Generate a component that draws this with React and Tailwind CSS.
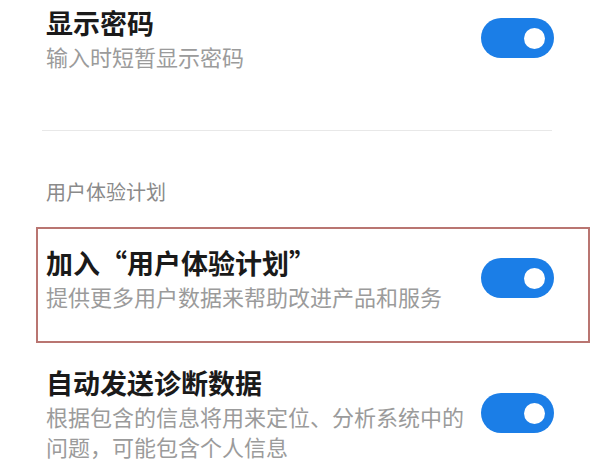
import React from 'react';

const cjk = { fontFamily: '"Noto Sans CJK SC", "Noto Sans", sans-serif' };

// Blue pill switch, always on in this screen
const Toggle = () => (
  <div className="w-[73px] h-[40px] shrink-0 rounded-full bg-[#1b7ee7] flex items-center justify-end pr-[9px]">
    <div className="w-[21px] h-[21px] rounded-full bg-white" />
  </div>
);

const SettingRow = ({ title, desc, className = '' }) => (
  <div className={`flex items-center justify-between ${className}`}>
    <div className="max-w-[424px]">
      <div className="text-[27px] leading-[36px] font-bold text-[#1a1a1a]">{title}</div>
      <div className="text-[22px] leading-[30px] text-[#9b9b9b]">{desc}</div>
    </div>
    <Toggle />
  </div>
);

const App = () => {
  return (
    <div lang="zh-CN" className="w-[599px] h-[467px] overflow-hidden bg-white" style={cjk}>
      <SettingRow
        className="pt-[5px] pl-[46px] pr-[45px]"
        title="显示密码"
        desc="输入时短暂显示密码"
      />

      <div className="mt-[59px] ml-[42px] mr-[47px] h-px bg-[#e8e8e8]" />

      <div className="mt-[47px] pl-[46px] text-[20px] leading-[28px] text-[#8a8a8a]">
        用户体验计划
      </div>

      {/* highlighted item */}
      <div className="mt-[21px] ml-[36px] mr-[9px] border-2 border-[#b97571] pt-[16px] pb-[30px] pl-[8px] pr-[34px]">
        <SettingRow
          title="加入“用户体验计划”"
          desc="提供更多用户数据来帮助改进产品和服务"
        />
      </div>

      <SettingRow
        className="mt-[22px] pl-[46px] pr-[45px]"
        title="自动发送诊断数据"
        desc="根据包含的信息将用来定位、分析系统中的问题，可能包含个人信息"
      />
    </div>
  );
};

export default App;
